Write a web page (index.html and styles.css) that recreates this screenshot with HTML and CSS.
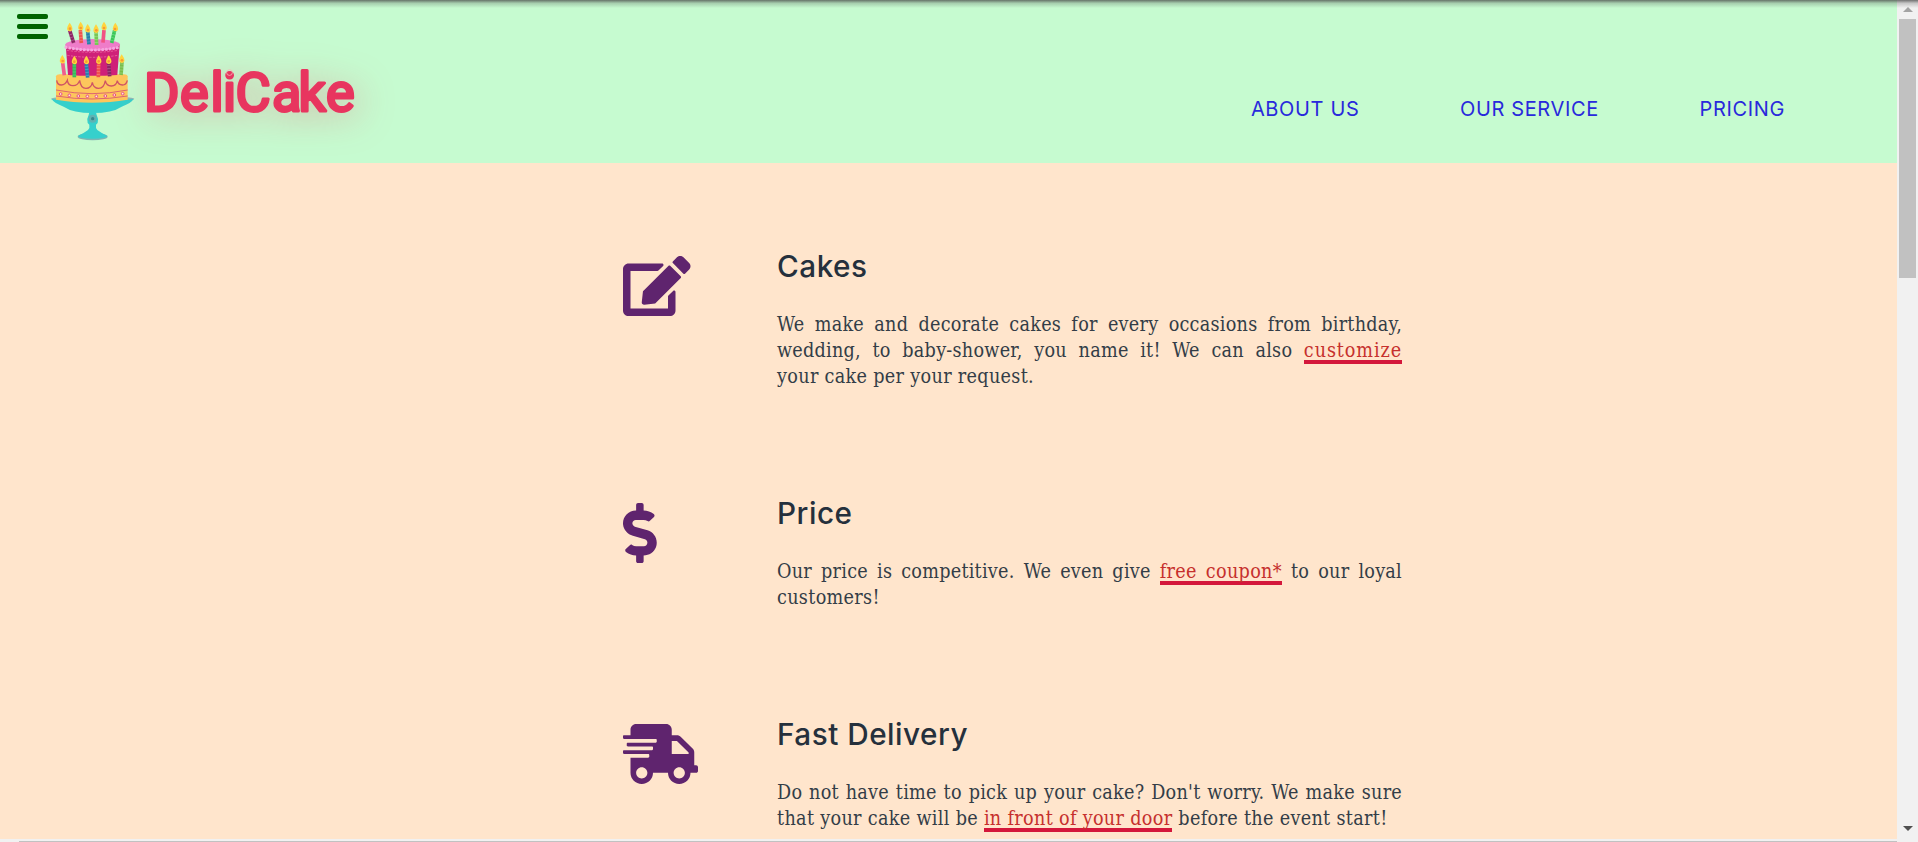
FILE: index.html
```html
<!DOCTYPE html>
<html lang="en">
<head>
<meta charset="utf-8">
<title>DeliCake</title>
<link rel="stylesheet" href="styles.css">
</head>
<body>
<div class="window">
  <div class="page">
    <header class="header">
      <button class="menu" aria-label="Menu"><span class="bar"></span><span class="bar"></span><span class="bar"></span></button>
      <div class="brand">
        <svg class="cake" viewBox="150 60 255 365">
          <!-- stand -->
          <ellipse cx="278" cy="410" rx="45" ry="11" fill="#7fb5b3"/>
          <path d="M234 408q18-9 30-18q6-6 4-16l-5-5q-4-12 3-24l2-8h20l2 8q7 12 3 24l-5 5q-2 10 4 16q12 9 30 18q-4 8-44 8t-44-8z" fill="#35d0cc"/>
          <circle cx="278" cy="356" r="12" fill="#5fb3b3"/><circle cx="278" cy="356" r="5" fill="#36878d"/>
          <ellipse cx="278" cy="297" rx="125" ry="9" fill="#8fb7b8"/>
          <path d="M155 297q20 4 123 4t123-4q-7 12-36 23q-28 19-87 19t-87-19q-29-11-36-23z" fill="#35d0cc"/>
          <!-- lower tier -->
          <path d="M168 229q1-6 12-6h191q11 0 12 6v70q-50 9-107 9t-108-9z" fill="#fdc65c"/>
          <path d="M170 241q2 14 14 14t18-14q2 16 17 16t20-16q3 24 19 24t19-18q3 18 19 18t20-23q3 16 18 16t18-16q3 13 15 13t15-14" fill="none" stroke="#cf5364" stroke-width="4"/>
          <path d="M168 270q55 11 108 11t107-11M168 288q55 9 108 9t107-9" fill="none" stroke="#dd6570" stroke-width="3"/>
          <g fill="#fff0dc" stroke="#e7498a" stroke-width="3"><circle cx="182" cy="282" r="4"/><circle cx="208" cy="286" r="4"/><circle cx="235" cy="288" r="4"/><circle cx="262" cy="289" r="4"/><circle cx="289" cy="289" r="4"/><circle cx="316" cy="288" r="4"/><circle cx="343" cy="285" r="4"/><circle cx="368" cy="281" r="4"/></g>
          <!-- upper tier -->
          <path d="M197 133h162l-7 92q-74 5-148 0z" fill="#cf2078"/>
          <ellipse cx="278" cy="134" rx="82" ry="17" fill="#ef7cc9"/>
          <path d="M198 142q80 16 160 0" fill="none" stroke="#f7a5df" stroke-width="9" stroke-linecap="round" stroke-dasharray="1 10"/>
          <path d="M201 151q77 12 154 0M202 166q76 12 152 0" fill="none" stroke="#f07aa9" stroke-width="2" stroke-dasharray="7 4"/>
          <!-- candles -->
          <g stroke-width="11">
            <path d="M209 91l12 38" stroke="#8d2464"/><path d="M241 90l3 39" stroke="#f0534c"/><path d="M263 94l4 39" stroke="#2380a8"/><path d="M288 95l2 40" stroke="#77c955"/><path d="M312 90l-3 38" stroke="#f15383"/><path d="M344 91l-9 38" stroke="#3ac857"/>
            <path d="M188 188l5 38" stroke="#f15e8c"/><path d="M223 190v42" stroke="#35bf58"/><path d="M259 192l4 41" stroke="#2683b0"/><path d="M296 190l-1 42" stroke="#f0534c"/><path d="M326 190l3 39" stroke="#8d2464"/><path d="M366 186l-3 39" stroke="#77bf4b"/>
          </g>
          <g stroke="#ffffff" stroke-opacity=".3" stroke-width="11" stroke-dasharray="2 7">
            <path d="M209 94l12 35"/><path d="M241 94l3 35"/><path d="M263 98l4 35"/><path d="M288 99l2 36"/><path d="M344 95l-9 34"/><path d="M223 197v35"/><path d="M259 198l4 35"/><path d="M296 196l-1 36"/><path d="M326 196l3 33"/><path d="M366 191l-3 34"/>
          </g>
          <g fill="#ffd43e">
            <path id="flame" d="M209 68q10 14 8 21q-5 9-15 1q-3-8 7-22z"/>
            <use href="#flame" x="33" y="-3"/><use href="#flame" x="54" y="4"/><use href="#flame" x="79" y="5"/><use href="#flame" x="103" y="-3"/><use href="#flame" x="137"/>
            <use href="#flame" x="-22" y="97"/><use href="#flame" x="14" y="99"/><use href="#flame" x="50" y="99"/><use href="#flame" x="87" y="98"/><use href="#flame" x="117" y="98"/><use href="#flame" x="156" y="95"/>
          </g>
          <g fill="#f79a35"><circle cx="210" cy="86" r="4"/><circle cx="242" cy="84" r="4"/><circle cx="264" cy="90" r="4"/><circle cx="289" cy="91" r="4"/><circle cx="312" cy="84" r="4"/><circle cx="345" cy="87" r="4"/><circle cx="188" cy="183" r="4"/><circle cx="223" cy="185" r="4"/><circle cx="259" cy="185" r="4"/><circle cx="296" cy="184" r="4"/><circle cx="326" cy="184" r="4"/><circle cx="366" cy="181" r="4"/></g>
        </svg>
        <svg class="wordmark" viewBox="0 0 260 130">
          <text class="wordmark-text" y="70.500" x="14 50 80.500 93 105.500 142 168.500 196">DeliCake</text>
          <circle cx="99.500" cy="32.500" r="2.900" fill="none" stroke="#ecc0b8" stroke-width=".8"/>
        </svg>
      </div>
      <nav class="nav">
        <a class="nav-link">ABOUT US</a>
        <a class="nav-link">OUR SERVICE</a>
        <a class="nav-link">PRICING</a>
      </nav>
    </header>
    <main class="features">
      <section class="feature">
        <div class="icon-cell"><svg class="icon" viewBox="0 0 576 512"><path d="M402.600 83.200l90.200 90.200c3.800 3.800 3.800 10 0 13.800L274.400 405.600l-92.800 10.300c-12.400 1.400-22.900-9.100-21.500-21.500l10.300-92.800L388.800 83.200c3.800-3.800 10-3.800 13.800 0zm162-22.900l-48.800-48.800c-15.200-15.200-39.900-15.200-55.200 0l-35.400 35.400c-3.800 3.800-3.800 10 0 13.800l90.200 90.200c3.800 3.800 10 3.800 13.800 0l35.400-35.400c15.200-15.300 15.200-40 0-55.200zM384 346.200V448H64V128h229.800c3.200 0 6.200-1.300 8.500-3.500l40-40c7.600-7.600 2.200-20.500-8.500-20.500H48C21.500 64 0 85.500 0 112v352c0 26.500 21.500 48 48 48h352c26.500 0 48-21.500 48-48V306.200c0-10.700-12.900-16-20.500-8.500l-40 40c-2.200 2.300-3.500 5.300-3.500 8.500z"/></svg></div>
        <div class="copy">
          <h2 class="title">Cakes</h2>
          <p class="text"><span class="line full">We make and decorate cakes for every occasions from birthday,</span> <span class="line full">wedding, to baby-shower, you name it! We can also <a class="link">customize</a></span> <span class="line">your cake per your request.</span></p>
        </div>
      </section>
      <section class="feature">
        <div class="icon-cell"><svg class="icon" viewBox="0 0 288 512"><path d="M209.200 233.400l-108-31.600C88.700 198.200 80 186.500 80 173.500c0-16.300 13.200-29.500 29.500-29.500h66.300c12.200 0 24.200 3.700 34.200 10.500 6.100 4.100 14.300 3.100 19.500-2l34.800-34c7.100-6.900 6.100-18.400-1.800-24.500C238 74.800 207.400 64.100 176 64V16c0-8.800-7.200-16-16-16h-32c-8.800 0-16 7.200-16 16v48h-2.500C45.800 64-5.400 118.700.5 183.600c4.200 46.100 39.400 83.600 83.800 96.600l102.500 30c12.500 3.700 21.200 15.300 21.200 28.300 0 16.300-13.200 29.500-29.500 29.500h-66.300C100 368 88 364.300 78 357.500c-6.100-4.100-14.300-3.100-19.500 2l-34.800 34c-7.100 6.900-6.100 18.400 1.800 24.500 24.500 19.200 55.100 29.900 86.500 30v48c0 8.800 7.200 16 16 16h32c8.800 0 16-7.200 16-16v-48.200c46.600-.9 90.300-28.600 105.700-72.700 21.500-61.600-14.600-124.800-72.500-141.700z"/></svg></div>
        <div class="copy">
          <h2 class="title">Price</h2>
          <p class="text"><span class="line full">Our price is competitive. We even give <a class="link link-coupon">free coupon*</a> to our loyal</span> <span class="line">customers!</span></p>
        </div>
      </section>
      <section class="feature">
        <div class="icon-cell"><svg class="icon" viewBox="0 0 640 512"><path d="M624 352h-16V243.900c0-12.700-5.100-24.900-14.100-33.900L494 110.100c-9-9-21.200-14.100-33.900-14.100H416V48c0-26.500-21.500-48-48-48H112C85.500 0 64 21.500 64 48v48H8c-4.400 0-8 3.600-8 8v16c0 4.400 3.600 8 8 8h272c4.400 0 8 3.600 8 8v16c0 4.400-3.600 8-8 8H40c-4.400 0-8 3.600-8 8v16c0 4.400 3.600 8 8 8h208c4.400 0 8 3.600 8 8v16c0 4.400-3.600 8-8 8H8c-4.400 0-8 3.600-8 8v16c0 4.400 3.600 8 8 8h208c4.400 0 8 3.600 8 8v16c0 4.400-3.600 8-8 8H64v128c0 53 43 96 96 96s96-43 96-96h128c0 53 43 96 96 96s96-43 96-96h48c8.800 0 16-7.200 16-16v-32c0-8.800-7.200-16-16-16zM160 464c-26.500 0-48-21.500-48-48s21.500-48 48-48 48 21.500 48 48-21.500 48-48 48zm320 0c-26.500 0-48-21.500-48-48s21.500-48 48-48 48 21.500 48 48-21.500 48-48 48zm80-208H416V144h44.100l99.900 99.900V256z"/></svg></div>
        <div class="copy">
          <h2 class="title">Fast Delivery</h2>
          <p class="text"><span class="line full">Do not have time to pick up your cake? Don't worry. We make sure</span> <span class="line">that your cake will be <a class="link">in front of your door</a> before the event start!</span></p>
        </div>
      </section>
    </main>
    <div class="scroll-x"><div class="thumb-x"></div></div>
  </div>
  <div class="scroll-y">
    <svg class="arrow" viewBox="0 0 10 5"><path d="M5 0l5 5H0z" fill="#a3a3a3"/></svg>
    <div class="thumb-y"></div>
    <svg class="arrow arrow-down" viewBox="0 0 10 5"><path d="M5 5l5-5H0z" fill="#505050"/></svg>
  </div>
  <div class="top-shadow"></div>
</div>
</body>
</html>
```
FILE: styles.css
```css
* { box-sizing: border-box; }
body { margin: 0; overflow: hidden; background: #ffe5cc; }
.window { position: relative; display: flex; width: 1918px; height: 842px; overflow: hidden; }
.page { display: flex; flex-direction: column; width: 1897px; height: 842px; background: #ffe5cc; }
.header { display: flex; flex: none; height: 163px; padding-left: 17px; background: #c6fbd0; }
.menu { display: flex; flex-direction: column; gap: 5px; width: 31px; margin: 14px 0 0; padding: 0; border: 0; background: none; }
.bar { height: 5px; border-radius: 2px; background: #006400; }
.brand { display: flex; flex: none; width: 342px; margin-left: 2px; }
.cake { flex: none; width: 85px; height: 121.670px; margin-top: 20px; }
.wordmark { flex: none; width: 260px; height: 130px; margin: 40px 0 0 -5px; overflow: visible; filter: drop-shadow(5px 5px 18px rgba(235, 60, 90, .35)); }
.wordmark-text { font: 400 54px "Roboto", sans-serif; fill: #e8355f; stroke: #e8355f; stroke-width: 3px; stroke-linejoin: round; }
.nav { display: flex; flex: 1; align-items: flex-start; justify-content: flex-end; gap: 100.500px; padding: 97px 112px 0 0; }
.nav-link { font: 400 20px/24px "Inter", sans-serif; letter-spacing: .650px; color: #2929dc; white-space: nowrap; }
.features { flex: 1; min-height: 0; overflow: hidden; padding: 82px 0 0 623px; }
.feature { display: grid; grid-template-columns: 154px 625px; padding-bottom: 90.500px; }
.icon-cell { padding-top: 10.500px; }
.icon { display: block; height: 60px; fill: #5f246e; }
.title { margin: 0; font: 450 29.700px/42px "Inter", sans-serif; letter-spacing: .500px; color: #25303c; }
.text { margin: 24.500px 0 0; padding-bottom: 11.500px; font: 400 19.600px/26.200px "DejaVu Serif Condensed", "DejaVu Serif", serif; font-stretch: condensed; letter-spacing: .320px; color: #333d47; }
.line { display: block; white-space: nowrap; }
.full { letter-spacing: .250px; text-align: justify; text-align-last: justify; white-space: normal; }
.full .link { letter-spacing: .900px; }
.full .link-coupon { letter-spacing: .300px; }
.link { color: #c6302d; background: linear-gradient(#d4173b, #d4173b) 0 100% / 100% 4px no-repeat; padding-bottom: 2px; }
.scroll-x { flex: none; height: 3px; padding: 2px 0 0 19px; background: #f1f1f1; }
.thumb-x { height: 1px; background: #c1c1c1; }
.scroll-y { display: flex; flex-direction: column; align-items: center; width: 21px; padding: 7px 0 11px; background: #f1f1f1; }
.arrow { width: 10px; height: 5px; }
.arrow-down { margin-top: auto; }
.thumb-y { width: 17px; height: 259px; margin-top: 7px; background: #c1c1c1; }
.top-shadow { position: absolute; inset: 0 0 auto; height: 8px; background: linear-gradient(rgba(70, 70, 70, .75), rgba(70, 70, 70, .25) 40%, transparent); }
```
